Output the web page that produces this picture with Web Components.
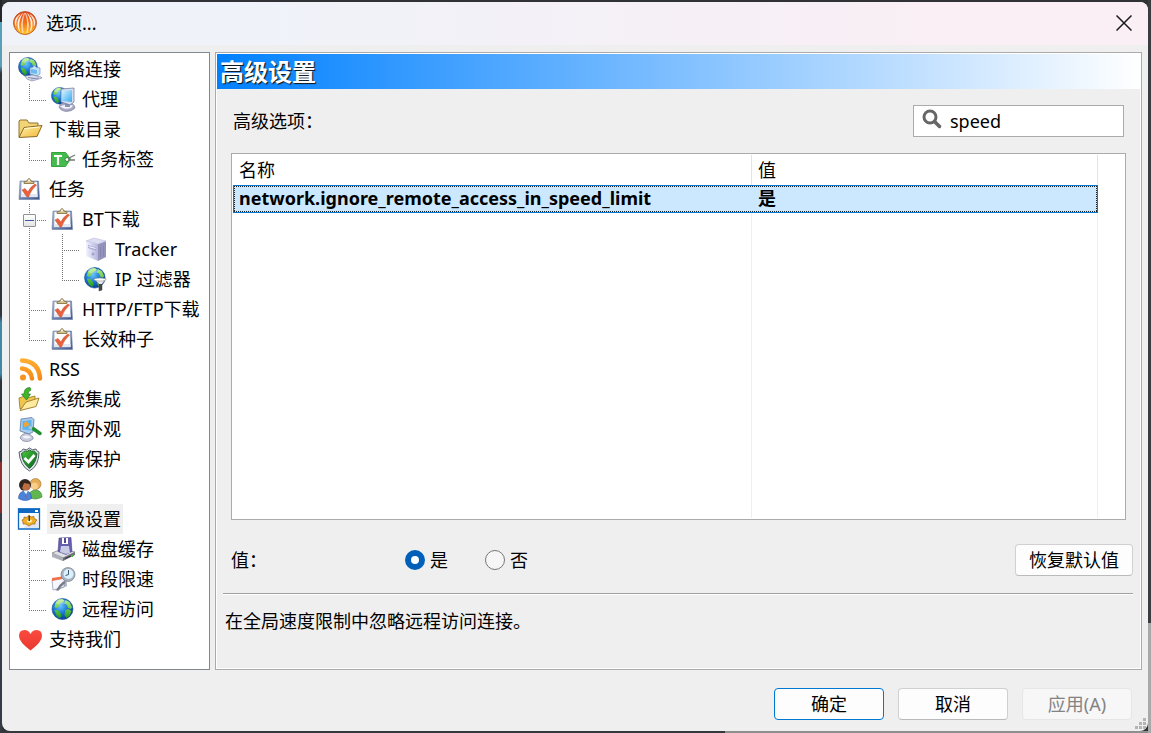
<!DOCTYPE html>
<html lang="zh-CN">
<head>
  <meta charset="UTF-8">
  <meta name="viewport" content="width=device-width, initial-scale=1">
  <title>选项...</title>
  <style>
    html, body {
      height: 100%;
      margin: 0;
    }
    /* the desktop shows as a thin edge round the dialog */
    body {
      box-sizing: border-box;
      padding: 2px;
      overflow: hidden;
      background:
        linear-gradient(#3a3c40 85%, #a8a8a8 85%) right / 3px 100% no-repeat,
        linear-gradient(90deg, #35393e 63%, #8e8e8e 63%) bottom / 100% 2px no-repeat,
        linear-gradient(#23272c 3%, #5a9fb8 3% 9%, #30363e 10% 43%, #4187a8 44% 51%, #2c323a 52% 63%, #8a2f2c 63% 70%, #343c48 70%) left / 2px 100% no-repeat,
        #303236;
      color: #000;
      font: 18px/24px "Noto Sans", "Noto Sans CJK SC", sans-serif;
    }
  </style>
</head>
<body>
  <options-dialog>
    <tree-view slot="nav">
      <tree-node icon="network">网络连接
        <tree-node slot="children" icon="proxy">代理</tree-node>
      </tree-node>
      <tree-node icon="folder">下载目录
        <tree-node slot="children" icon="tag">任务标签</tree-node>
      </tree-node>
      <tree-node icon="task">任务
        <tree-node slot="children" icon="task" toggle>BT下载
          <tree-node slot="children" icon="server">Tracker</tree-node>
          <tree-node slot="children" icon="filter">IP 过滤器</tree-node>
        </tree-node>
        <tree-node slot="children" icon="task">HTTP/FTP下载</tree-node>
        <tree-node slot="children" icon="task">长效种子</tree-node>
      </tree-node>
      <tree-node icon="rss">RSS</tree-node>
      <tree-node icon="integrate">系统集成</tree-node>
      <tree-node icon="appearance">界面外观</tree-node>
      <tree-node icon="shield">病毒保护</tree-node>
      <tree-node icon="users">服务</tree-node>
      <tree-node icon="advanced" selected>高级设置
        <tree-node slot="children" icon="disk">磁盘缓存</tree-node>
        <tree-node slot="children" icon="schedule">时段限速</tree-node>
        <tree-node slot="children" icon="globe">远程访问</tree-node>
      </tree-node>
      <tree-node icon="heart">支持我们</tree-node>
    </tree-view>
    <settings-panel>高级设置</settings-panel>
    <push-button slot="actions" primary>确定</push-button>
    <push-button slot="actions">取消</push-button>
    <push-button slot="actions" disabled>应用(A)</push-button>
  </options-dialog>

  <template id="OptionsDialog">
    <style>
      :host {
        display: flex;
        flex-direction: column;
        box-sizing: border-box;
        height: 100%;
        margin-right: 1px;
        border-radius: 8px;
        overflow: hidden;
        background-color: #efefef;
      }
      header {
        display: flex;
        align-items: center;
        height: 43px;
        flex: none;
        padding: 0 14px 2px 11px;
        box-sizing: border-box;
        background: linear-gradient(90deg, #eff3f9 20%, #f9eff5 80%);
      }
      h1 {
        flex: 1;
        margin: 0 0 0 9px;
        font-size: 18px;
        font-weight: normal;
      }
      .close {
        width: 20px;
        height: 20px;
        padding: 2px;
        border: 0;
        background: none;
      }
      .close svg {
        display: block;
      }
      main {
        display: flex;
        flex: 1;
        gap: 5px;
        min-height: 0;
        padding: 7px 6px 0 7px;
      }
      footer {
        display: flex;
        justify-content: flex-end;
        gap: 14px;
        padding: 18px 16px 11px;
        position: relative;
      }
      .grip {
        position: absolute;
        right: 1px;
        bottom: 1px;
      }
    </style>
    <header>
      <ui-icon name="logo"></ui-icon>
      <h1>选项...</h1>
      <button class="close" aria-label="关闭">
        <svg width="16" height="16" viewBox="0 0 16 16"><path d="M.5 .5l15 15M15.5 .5l-15 15" stroke="#1a1a1a" stroke-width="1.5"/></svg>
      </button>
    </header>
    <main>
      <slot name="nav"></slot>
      <slot></slot>
    </main>
    <footer>
      <slot name="actions"></slot>
      <svg class="grip" width="12" height="12" fill="#b4b4b4"><path d="M8 0h3v3h-3zM4 4h3v3h-3zM8 4h3v3h-3zM0 8h3v3h-3zM4 8h3v3h-3zM8 8h3v3h-3z"/></svg>
    </footer>
  </template>

  <template id="TreeView">
    <style>
      :host {
        display: block;
        box-sizing: border-box;
        flex: 0 0 201px;
        padding: 1px 0;
        border: 1px solid #828790;
        background-color: #fff;
        overflow: hidden;
      }
    </style>
    <slot></slot>
  </template>

  <template id="TreeNode">
    <style>
      :host {
        display: block;
        position: relative;
      }
      /* dotted branch lines */
      :host([slot="children"]) {
        padding-left: 14px;
        background-image:
          repeating-linear-gradient(180deg, #777 0 1px, transparent 1px 2px),
          repeating-linear-gradient(90deg, #777 0 1px, transparent 1px 2px);
        background-size: 1px 100%, 17px 1px;
        background-position: 0 0, 0 16px;
        background-repeat: no-repeat;
      }
      :host([slot="children"]:last-child) {
        background-size: 1px 17px, 17px 1px;
      }
      .row {
        display: flex;
        align-items: center;
        gap: 5px;
        height: 30px;
        padding-left: 8px;
      }
      .label {
        padding: 3px 2px;
        white-space: nowrap;
      }
      :host([selected]) .label {
        background-color: #efefef;
      }
      .children {
        margin-left: 19px;
      }
      .toggle {
        display: none;
        position: absolute;
        left: -6px;
        top: 10px;
        width: 13px;
        height: 13px;
        padding: 0;
        border: 1px solid #919191;
        border-radius: 1px;
        background: linear-gradient(#3c5aa0, #3c5aa0) center / 9px 1px no-repeat, linear-gradient(#fff, #e4e4e4);
      }
      :host([toggle]) .toggle {
        display: block;
      }
    </style>
    <button class="toggle" aria-label="折叠"></button>
    <div class="row">
      <ui-icon></ui-icon>
      <span class="label"><slot></slot></span>
    </div>
    <div class="children"><slot name="children"></slot></div>
  </template>

  <template id="PushButton">
    <style>
      :host {
        display: block;
        width: var(--button-width, 110px);
      }
      button {
        display: block;
        box-sizing: border-box;
        width: 100%;
        height: 32px;
        padding: 0;
        border: 1px solid #d0d0d0;
        border-bottom-color: #bababa;
        border-radius: 4px;
        background-color: #fdfdfd;
        color: #000;
        font: inherit;
      }
      :host([primary]) button {
        border-color: #0078d4;
      }
      button:disabled {
        border-color: #e6e6e6;
        background-color: #f7f7f7;
        color: #838383;
      }
    </style>
    <button><slot></slot></button>
  </template>

  <template id="SettingsPanel">
    <style>
      :host {
        display: flex;
        flex: 1;
        flex-direction: column;
        box-sizing: border-box;
        min-width: 0;
        border: 1px solid #ababab;
        outline: 1px solid #fff;
        outline-offset: -2px;
        padding: 1px;
      }
      h2 {
        margin: 0;
        height: 35px;
        padding-left: 3px;
        background: linear-gradient(90deg, #0080ff, #fff);
        color: #fff;
        font-size: 24px;
        line-height: 36px;
        text-shadow: 1px 1px 1px #111;
      }
      .top {
        display: flex;
        align-items: center;
        justify-content: space-between;
        margin: 16px;
      }
      .search {
        display: flex;
        align-items: center;
        gap: 8px;
        box-sizing: border-box;
        width: 211px;
        height: 32px;
        padding: 0 8px;
        border: 1px solid #ababab;
        background-color: #fff;
      }
      .search input {
        flex: 1;
        min-width: 0;
        padding: 0;
        border: 0;
        outline: 0;
        font: inherit;
      }
      .list {
        flex: 1;
        min-height: 0;
        margin: 0 14px;
        padding: 1px;
        border: 1px solid #ababab;
        background-color: #fff;
      }
      table {
        width: calc(100% - 26px);
        height: 100%;
        border-collapse: separate;
        border-spacing: 0;
        table-layout: fixed;
      }
      th, td {
        box-sizing: border-box;
        padding: 0 6px;
        border-right: 1px solid #e8f1f9;
        text-align: left;
      }
      th {
        height: 30px;
        border-color: #e3e3e3;
        font-weight: normal;
      }
      th:first-child {
        width: 60%;
      }
      tr.selected td {
        height: 28px;
        padding-bottom: 2px;
        border: 1px solid #0078d4;
        border-width: 1px 0;
        background:
          repeating-linear-gradient(90deg, #222 0 1px, transparent 1px 2px) top / 100% 1px no-repeat,
          repeating-linear-gradient(90deg, #222 0 1px, transparent 1px 2px) bottom / 100% 1px no-repeat,
          repeating-linear-gradient(#222 0 1px, transparent 1px 2px) var(--focus-edge, -9px) 0 / 1px 100% no-repeat,
          #cce8ff;
        background-clip: padding-box;
        background-origin: padding-box;
        font-weight: bold;
        line-height: 24px;
        white-space: nowrap;
      }
      tr.selected td:first-child {
        --focus-edge: 0;
        border-left-width: 1px;
        padding-left: 5px;
      }
      tr.selected td:last-child {
        --focus-edge: 100%;
        border-right-width: 1px;
      }
      .value {
        display: flex;
        align-items: center;
        margin: 24px 7px 17px 14px;
      }
      .value .name {
        width: 174px;
      }
      .value label {
        display: flex;
        align-items: center;
        gap: 5px;
        width: 80px;
      }
      input[type="radio"] {
        appearance: none;
        box-sizing: border-box;
        width: 20px;
        height: 20px;
        margin: 0;
        border: 1px solid #777;
        border-radius: 50%;
        background-color: #f6f6f6;
      }
      input[type="radio"]:checked {
        border: 6px solid #005fb8;
        background-color: #fff;
      }
      push-button {
        --button-width: 118px;
        margin-left: auto;
      }
      .description {
        margin: 0 7px 0 6px;
        padding: 15px 2px 35px;
        border-top: 1px solid #a0a0a0;
        box-shadow: inset 0 1px #fff;
      }
    </style>
    <h2><slot></slot></h2>
    <div class="top">
      <label for="filter">高级选项：</label>
      <div class="search">
        <ui-icon name="search"></ui-icon>
        <input id="filter" type="text" value="speed">
      </div>
    </div>
    <div class="list">
      <table>
        <thead>
          <tr><th>名称</th><th>值</th></tr>
        </thead>
        <tbody>
          <tr class="selected"><td>network.ignore_remote_access_in_speed_limit</td><td>是</td></tr>
          <tr><td></td><td></td></tr>
        </tbody>
      </table>
    </div>
    <div class="value">
      <span class="name">值：</span>
      <label><input type="radio" name="value" checked>是</label>
      <label><input type="radio" name="value">否</label>
      <push-button>恢复默认值</push-button>
    </div>
    <div class="description">在全局速度限制中忽略远程访问连接。</div>
  </template>

<script>
  const EARTH = `
    <radialGradient id="sea" cx=".4" cy=".35" r=".7"><stop offset="0" stop-color="#6cc6ff"/><stop offset=".5" stop-color="#1878d4"/><stop offset="1" stop-color="#06358c"/></radialGradient>
    <linearGradient id="land" x2="0" y2="1"><stop offset="0" stop-color="#b4f080"/><stop offset="1" stop-color="#1f9a1c"/></linearGradient>
    <circle cx="11" cy="11" r="10.5" fill="url(#sea)" stroke="#174b91" stroke-width=".6"/>
    <path fill="url(#land)" d="M7 1.500l4-.5 2 1.500-2 2-2 .5-1 3-3 2-2-1 1-4zM3 12l3 0 3 3 1 3-2 2.500-3-3zM14 2l4 2 2.500 5-1 2-3-1-1-3-2.500-1.500zM14 12l3-1 3 2-2 5-3 2-2-3z"/>
    <ellipse cx="9" cy="4" rx="5" ry="2.500" fill="#fff" opacity=".3"/>`;

  const MONITOR = `
    <linearGradient id="screen" x2="1" y2="1"><stop offset="0" stop-color="#d5f4ff"/><stop offset="1" stop-color="#36a9ef"/></linearGradient>
    <path fill="#aaa8c4" stroke="#777795" stroke-width=".6" d="M8 20q1-4 7-5h4q5 3 5 6-3 3.500-9 3.500-6-1-7-4.500z"/>
    <path fill="#f3f3fc" d="M9 19.500q5-3 13-1-2 4-9 3z"/>
    <path fill="#8a93b1" d="M14 15l5 1v4h-5z"/>
    <path fill="#d7ddec" stroke="#5e74a0" stroke-width=".7" d="M10 2l13-1v14l-4 3-9-3z"/>
    <path fill="url(#screen)" d="M11 4l10-1v12l-10-1z"/>`;

  const ICONS = {
    logo: `
      <linearGradient id="a" x2="0" y2="1"><stop offset="0" stop-color="#e5481a"/><stop offset=".5" stop-color="#f57418"/><stop offset="1" stop-color="#ffc62c"/></linearGradient>
      <linearGradient id="b" x2="0" y2="1"><stop offset="0" stop-color="#fff"/><stop offset="1" stop-color="#ffe9b0"/></linearGradient>
      <circle cx="12" cy="12" r="11.5" fill="url(#a)" stroke="#b24a22" stroke-width=".8"/>
      <path fill="url(#b)" d="M11.500 2Q8 11 10 22 6.500 13 11.500 2zM12.500 2Q17.500 13 14 22 16 11 12.500 2zM9.500 2.500Q4.500 10 6.500 20 1.500 11 9.500 2.500zM14.500 2.500Q22.500 11 17.500 20 19.500 10 14.500 2.500zM7 3.500Q2.500 8 3 15 0 8 7 3.500zM17 3.500Q24 8 21 15 21.500 8 17 3.500z" stroke="#fff" stroke-width=".4"/>`,
    search: `<circle cx="8" cy="8" r="6" fill="none" stroke="#666" stroke-width="3"/><path d="M12.500 12.500l5 5" stroke="#666" stroke-width="3.500" stroke-linecap="round"/>`,
    network: `<g transform="scale(.9)">${EARTH}</g>
      <path fill="#bfe1fb" stroke="#6a90c2" stroke-width=".7" d="M12 11l3-1 1-2 2 2 4 1v6l-3 2-7-2z"/>
      <path fill="#6db9ee" d="M13 12l6 1v4l-6-1z"/>
      <path fill="#e0e2ef" stroke="#7d86a5" stroke-width=".7" d="M7 19l7-1 9 2 1 1-10 3-5-2z"/>
      <path stroke="#8290b5" d="M10 20.500l8 1M13 22l8-1"/>`,
    proxy: `<g transform="scale(.8)">${EARTH}</g>${MONITOR}`,
    folder: `
      <linearGradient id="a" x2="1" y2="1"><stop offset="0" stop-color="#fff2ae"/><stop offset="1" stop-color="#f2b631"/></linearGradient>
      <path fill="#f3d474" stroke="#8d7133" d="M1 20V4l1-1h7l2 3h9v4"/>
      <path fill="url(#a)" stroke="#886a28" stroke-linejoin="round" d="M1 20.500l5-10 18-2-5 11z"/>
      <path stroke="#fff8d2" fill="none" d="M6.500 11.500l15-1.500"/>`,
    tag: `
      <path fill="#45bb4d" stroke="#35a43e" d="M.5 5.500h14l5 6.500-5 7.500H.5z"/>
      <path stroke="#fff" stroke-width="2.200" fill="none" d="M3 9h8M7 9v9"/>
      <circle cx="16" cy="12.500" r="2" fill="#fff" stroke="#398242"/>
      <path fill="none" stroke="#777" stroke-width="1.300" d="M17 11.500l7-3.500M17 13h7"/>`,
    task: `
      <linearGradient id="a" x2="1" y2="1"><stop offset="0" stop-color="#a6b5d4"/><stop offset="1" stop-color="#3c558d"/></linearGradient>
      <path fill="url(#a)" stroke="#6d7fa5" stroke-width=".6" d="M2 4h18.500l1 18.500H1z"/>
      <path fill="#fff" stroke="#c4ccdb" stroke-width=".5" d="M3.500 5h15.500l.5 15H3z"/>
      <path fill="#e2e7f1" d="M3 17h16.500v3H3z"/>
      <path fill="#d3c08a" stroke="#826b3b" stroke-width=".8" d="M6 6.500V5l3-1q2-5 4 0l3 1v1.500z"/>
      <circle cx="11" cy="3.500" r=".9" fill="#fff"/>
      <path fill="#ea5f3c" stroke="#c04a2c" stroke-width=".5" d="M4 13l3-1.500 3 3.500q2-5 7-8l1.500 1Q13 13 10.500 20H9z"/>`,
    server: `
      <linearGradient id="a" x2="1"><stop offset="0" stop-color="#f2f2ff"/><stop offset="1" stop-color="#b4b4dc"/></linearGradient>
      <path fill="url(#a)" d="M2 4l12 3v17L2 19z"/>
      <path fill="#9393bc" d="M14 7l8-3v16l-8 4z"/>
      <path fill="#dcdcf3" stroke="#b5b5d5" stroke-width=".5" d="M2 4l8-3 12 3-8 3z"/>
      <path fill="#a5a5d2" d="M4 8l8 2.500v3L4 11z"/><path fill="#fff" d="M4.500 9l7 2v1l-7-2z"/>
      <circle cx="9" cy="17" r="1.500" fill="#a3a3d2"/><path stroke="#8383ae" stroke-width=".7" d="M16.500 10v10M19.500 9v10"/>`,
    filter: `<g transform="scale(.98)">${EARTH}</g>
      <path fill="#e9e9e9" stroke="#777" stroke-width=".7" d="M10 12h12l-4 5v6l-3 1v-7z"/>
      <path fill="#444" d="M15 17h3v6l-3 1z"/><ellipse cx="16" cy="12.500" rx="6" ry="1.500" fill="#fff" stroke="#888" stroke-width=".5"/>`,
    rss: `
      <linearGradient id="a" x2="0" y2="1"><stop offset="0" stop-color="#ffad33"/><stop offset="1" stop-color="#f58b16"/></linearGradient>
      <g fill="none" stroke="url(#a)" stroke-width="4.500" stroke-linecap="round"><path d="M4 11.500q9 1 10 10M4 3.500q17 1 18 18"/></g>
      <circle cx="5" cy="20.500" r="3" fill="#f6921e"/>`,
    integrate: `
      <path fill="#efc54b" stroke="#94752c" stroke-width=".8" d="M2 22L1 11l6-2 2 2 8-2v5z"/>
      <path fill="#ffeaa0" stroke="#a58433" stroke-linejoin="round" d="M2 23.500l6-8.500 13-4-3 8.500z"/>
      <path fill="#40b52a" stroke="#237b1c" stroke-width=".7" d="M12 .5q-6 0-6 6.500H3.500l5 6 4-6H10q0-3 3-4z"/>`,
    appearance: `
      <path fill="#c9cbdc" stroke="#7d819a" stroke-width=".7" d="M2 21q2-5 8-5l5 4v2q-4 4-10 2z"/>
      <path fill="#f2f2fa" d="M4 20q4-3 9 0-4 3-9 0z"/>
      <path fill="#a9ccef" stroke="#62799e" stroke-width=".8" d="M3 2l11-1.500 2 2-1 12.500-4 2-9-3z"/>
      <path fill="#5ab4ef" d="M4.500 4l9-1v10.500l-9-1z"/>
      <path fill="#f0a432" d="M6 6l2-2 2 2 2 1-2 2-4 1z"/>
      <path stroke="#208f2d" stroke-width="3.500" stroke-linecap="round" d="M15 11.500l7 5"/>
      <path stroke="#b7c5d0" stroke-width="3" d="M11 10l3 1.500"/>`,
    shield: `
      <linearGradient id="a" x2="1" y2="1"><stop offset="0" stop-color="#4cc840"/><stop offset="1" stop-color="#046018"/></linearGradient>
      <path fill="#e1e6ea" stroke="#59636c" d="M1 5q3 0 4-3 4 2 6.500-1 2.500 3 6.500 1 1 3 3 3 0 14-9.500 19Q2 19 1 5z"/>
      <path fill="url(#a)" stroke="#29653d" d="M3.500 6.500q2-1 3-2.500 3 1 5-1 2 2 5 1 1 2.500 2.500 2.500-1 10-7.500 15Q4.500 16 3.500 6.500z"/>
      <path fill="none" stroke="#fff" stroke-width="2.800" d="M6.500 11l4 4 6-7"/>`,
    users: `
      <circle cx="17.500" cy="7" r="5.500" fill="#e6ae56" stroke="#a06e26" stroke-width=".6"/><circle cx="16.500" cy="9" r="3.500" fill="#f8ce8c"/>
      <path fill="#62b64f" stroke="#32802c" stroke-width=".6" d="M11 20q0-7 7-7 6 1 6 7-7 4-13 0z"/>
      <circle cx="7" cy="8" r="6" fill="#35281f"/><circle cx="8" cy="9.500" r="4" fill="#bf6d40"/><path fill="#30241f" d="M2 8q2-6 8-4l2 3-6-1-2 5z"/>
      <path fill="#4a83dc" stroke="#2650a0" stroke-width=".6" d="M.5 21.500q0-7 7-8 6 1 6 8-6 4-13 0z"/>
      <path fill="#fff" d="M5.500 13.500l2.500 4 2-4z"/><path fill="#d94227" d="M7.500 14.500l1 6-1 1z"/>`,
    advanced: `
      <path fill="#f4f9ff" stroke="#0e67c1" stroke-width="1.300" d="M.5 2h21v20H.5z"/><path fill="#0e67c1" d="M0 1.500h22V6H0z"/>
      <path fill="#fff" d="M17 3h3v2h-3z"/>
      <path fill="#dde6f2" d="M6 20q7-7 15-7v8H7z"/>
      <path fill="#efae26" stroke="#a96c14" stroke-width=".8" d="M4 13l2-1v-2l3 .5L11 8l2 2 3-.5 0 2 3 1.500-2 2 0 2-3 0-3 2-3-2-3 0 0-2z"/>
      <ellipse cx="11.500" cy="14" rx="2.500" ry="1.500" fill="#fff3ba"/><path fill="#403929" d="M10.500 9h1.500v5h-1.500z"/>`,
    disk: `
      <path fill="#6b6e76" d="M1 18l11 6 12-6v-3L11 20z"/>
      <path fill="#e0e1e5" stroke="#747680" stroke-width=".7" d="M1 16l10-4 13 3-12 6z"/>
      <path fill="#aeb0b9" d="M1 16v4l11 4v-3z"/><path stroke="#353842" d="M14 21.500l7-3"/><path stroke="#45bc36" stroke-width="2" d="M20 19h2"/>
      <path fill="#655eac" stroke="#403a82" stroke-width=".5" d="M8 1l12-.5 1 14-6 3-8-3z"/>
      <path fill="#fff" d="M11 1h6v6h-6z"/><path fill="#c9cae3" d="M10 9h8l1 7-4 1-6-2z"/><path fill="#4d4890" d="M13 1h2v5h-2z"/>`,
    schedule: `
      <path fill="#a8b0c2" d="M1 13l14-4 1 10-11 5z"/>
      <path fill="#f5f7fc" stroke="#8c94a8" stroke-width=".7" d="M1 13l13-2-1 9-11 3z"/>
      <path fill="#ee7047" d="M1 11l10-1.500v2.500L1 14z"/>
      <path stroke="#777c8b" stroke-width="2.500" stroke-linecap="round" d="M7 22.500q2-4 6-7"/>
      <circle cx="17" cy="7.500" r="7" fill="#a9b1bf" stroke="#6c7482" stroke-width=".6"/>
      <circle cx="17.500" cy="7" r="5" fill="#d8f1ff"/><path fill="none" stroke="#4a5266" d="M17.500 3v4.500l-3 1"/>`,
    globe: `<g transform="translate(.5 1)">${EARTH}</g>`,
    heart: `
      <linearGradient id="a" x2="0" y2="1"><stop offset="0" stop-color="#fb4a3e"/><stop offset="1" stop-color="#e9382f"/></linearGradient>
      <path fill="url(#a)" d="M12.500 23.500Q1 15 1 9 1 3 6.500 3q4 0 6 4 2-4 6-4Q24 3 24 9q0 6-11.500 14.500z"/>`
  };

  // attaches an open shadow root holding a copy of the template
  function render(host, id) {
    const root = host.attachShadow({mode: 'open'});
    root.appendChild(document.getElementById(id).content.cloneNode(true));
    return root;
  }

  class UiIcon extends HTMLElement {
    static get observedAttributes() {
      return ['name'];
    }
    constructor() {
      super();
      this.attachShadow({mode: 'open'});
    }
    attributeChangedCallback() {
      this.shadowRoot.innerHTML = `
        <style>
          :host { display: block; flex: none; width: 24px; height: 24px; }
          :host([name="search"]) { width: 20px; }
          svg { display: block; overflow: visible; }
        </style>
        <svg width="24" height="24" viewBox="0 0 24 24" aria-hidden="true">${ICONS[this.getAttribute('name')]}</svg>`;
    }
  }

  class TreeView extends HTMLElement {
    constructor() {
      super();
      render(this, 'TreeView');
    }
    connectedCallback() {
      this.setAttribute('role', 'tree');
    }
  }

  class TreeNode extends HTMLElement {
    constructor() {
      super();
      render(this, 'TreeNode');
    }
    connectedCallback() {
      this.setAttribute('role', 'treeitem');
      this.shadowRoot.querySelector('ui-icon').setAttribute('name', this.getAttribute('icon'));
      this.shadowRoot.querySelector('.toggle').onclick = () => this.toggle();
    }
    toggle() {
      const children = this.shadowRoot.querySelector('.children');
      children.hidden = !children.hidden;
    }
  }

  class PushButton extends HTMLElement {
    constructor() {
      super();
      render(this, 'PushButton');
    }
    connectedCallback() {
      this.shadowRoot.querySelector('button').disabled = this.hasAttribute('disabled');
    }
  }

  class SettingsPanel extends HTMLElement {
    constructor() {
      super();
      render(this, 'SettingsPanel');
    }
  }

  class OptionsDialog extends HTMLElement {
    constructor() {
      super();
      render(this, 'OptionsDialog');
    }
  }

  window.customElements.define('ui-icon', UiIcon);
  window.customElements.define('push-button', PushButton);
  window.customElements.define('tree-node', TreeNode);
  window.customElements.define('tree-view', TreeView);
  window.customElements.define('settings-panel', SettingsPanel);
  window.customElements.define('options-dialog', OptionsDialog);
</script>
</body>
</html>
